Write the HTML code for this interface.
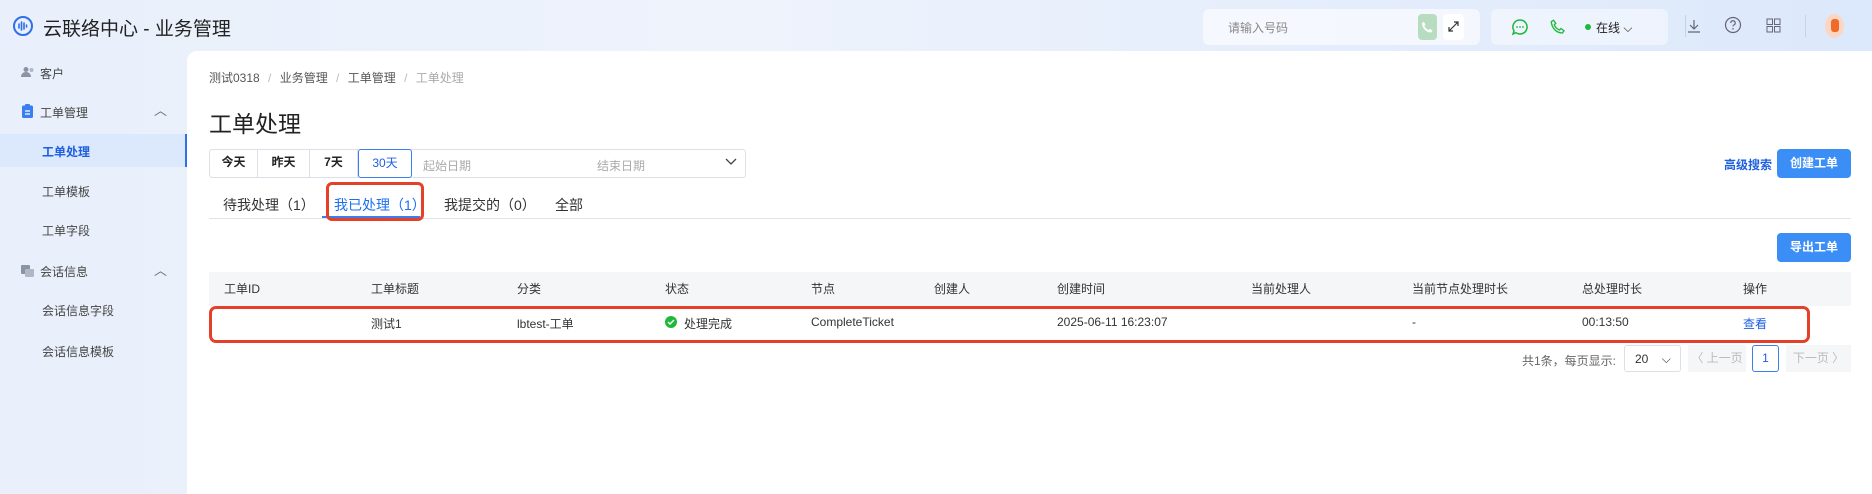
<!DOCTYPE html>
<html><head><meta charset="utf-8"><style>
*{margin:0;padding:0;box-sizing:border-box}
body{width:1872px;height:494px;overflow:hidden;font-family:"Liberation Sans","Noto Sans CJK SC",sans-serif;background:linear-gradient(90deg,#e9f0fb,#eef3fc 40%,#dce8fb);position:relative;color:#333;font-size:12px}
.a{position:absolute;white-space:nowrap}
.main{position:absolute;left:187px;top:51px;width:1685px;height:443px;background:#fff;border-top-left-radius:10px}
.si{position:absolute;left:42px;font-size:12px;color:#444}
.th{position:absolute;top:280px;font-size:12px;color:#333}
.td{position:absolute;top:315px;font-size:12px;color:#333}
.btn{position:absolute;background:#3a8ef6;color:#fff;font-size:12px;font-weight:bold;border-radius:4px;text-align:center}
.db{position:absolute;top:149px;height:29px;line-height:27px;text-align:center;font-size:12px;border-right:1px solid #dcdfe6;font-weight:bold;color:#222}
</style></head><body>
<svg class="a" style="left:12px;top:15px" width="22" height="22" viewBox="0 0 22 22"><circle cx="11" cy="11" r="9" fill="none" stroke="#2f6fe8" stroke-width="2"/><path d="M7 9v4M9.5 7v8M12 8v6M14.5 10v2" stroke="#2f6fe8" stroke-width="1.6" stroke-linecap="round"/></svg>
<div class="a" style="left:43px;top:14px;font-size:19px;color:#222">云联络中心 - 业务管理</div>
<div class="a" style="left:1203px;top:9px;width:277px;height:36px;background:rgba(255,255,255,.6);border-radius:6px"></div>
<div class="a" style="left:1228px;top:19px;font-size:12px;color:#888">请输入号码</div>
<div class="a" style="left:1418px;top:14px;width:19px;height:26px;background:#b7dcc0;border-radius:4px"></div>
<svg class="a" style="left:1420px;top:20px" width="15" height="15" viewBox="0 0 24 24"><path d="M6 3l3 4-2 2c1 3 4 6 7 7l2-2 4 3-2 3C10 20 4 14 3 5z" fill="#fff"/></svg>
<div class="a" style="left:1443px;top:14px;width:21px;height:26px;background:#fff;border-radius:4px"></div>
<svg class="a" style="left:1447px;top:20px" width="13" height="13" viewBox="0 0 13 13"><path d="M2 11L11 2M7 2h4v4M2 7v4h4" fill="none" stroke="#333" stroke-width="1.2"/></svg>
<div class="a" style="left:1491px;top:9px;width:177px;height:36px;background:rgba(255,255,255,.45);border-radius:6px"></div>
<svg class="a" style="left:1511px;top:18px" width="18" height="18" viewBox="0 0 18 18"><path d="M9 2a7 7 0 1 1-4 12.7L2 16l1-3.2A7 7 0 0 1 9 2z" fill="none" stroke="#1fb83a" stroke-width="1.5"/><circle cx="6" cy="9" r=".9" fill="#1fb83a"/><circle cx="9" cy="9" r=".9" fill="#1fb83a"/><circle cx="12" cy="9" r=".9" fill="#1fb83a"/></svg>
<svg class="a" style="left:1549px;top:18px" width="18" height="18" viewBox="0 0 24 24"><path d="M6 3l3 4-2 2c1 3 4 6 7 7l2-2 4 3-2 3C10 20 4 14 3 5z" fill="none" stroke="#1fb83a" stroke-width="1.8"/></svg>
<div class="a" style="left:1585px;top:24px;width:6px;height:6px;border-radius:50%;background:#1fb83a"></div>
<div class="a" style="left:1596px;top:19px;font-size:12px;color:#222">在线 ⌵</div>
<div class="a" style="left:1685px;top:15px;width:1px;height:22px;background:#c9d3e0"></div>
<svg class="a" style="left:1686px;top:18px" width="16" height="16" viewBox="0 0 16 16"><path d="M8 2v9M4 7l4 4 4-4M2 14h12" fill="none" stroke="#667" stroke-width="1.2"/></svg>
<svg class="a" style="left:1724px;top:16px" width="18" height="18" viewBox="0 0 18 18"><circle cx="9" cy="9" r="7.5" fill="none" stroke="#667" stroke-width="1.2"/><path d="M6.8 7a2.2 2.2 0 1 1 3 2c-.6.3-.8.7-.8 1.4" fill="none" stroke="#667" stroke-width="1.2"/><circle cx="9" cy="12.8" r=".8" fill="#667"/></svg>
<svg class="a" style="left:1766px;top:18px" width="15" height="15" viewBox="0 0 15 15"><rect x="1" y="1" width="5.5" height="5.5" fill="none" stroke="#667"/><rect x="8.5" y="1" width="5.5" height="5.5" fill="none" stroke="#667"/><rect x="1" y="8.5" width="5.5" height="5.5" fill="none" stroke="#667"/><rect x="8.5" y="8.5" width="5.5" height="5.5" fill="none" stroke="#667"/></svg>
<div class="a" style="left:1805px;top:15px;width:1px;height:22px;background:#c9d3e0"></div>
<div class="a" style="left:1825px;top:14px;width:19px;height:24px;border-radius:50%;background:#fcd6c4"></div>
<div class="a" style="left:1831px;top:19px;width:8px;height:13px;border-radius:3px;background:#f06a2a"></div>
<svg class="a" style="left:21px;top:66px" width="14" height="12" viewBox="0 0 14 12"><circle cx="5" cy="3.5" r="2.5" fill="#8a94a6"/><path d="M0 11c0-3 2-5 5-5s5 2 5 5z" fill="#8a94a6"/><circle cx="10.5" cy="4" r="2" fill="#b0b8c6"/></svg>
<div class="si" style="left:40px;top:65px">客户</div>
<svg class="a" style="left:22px;top:104px" width="11" height="14" viewBox="0 0 11 14"><rect x="0" y="1.5" width="11" height="12.5" rx="1.5" fill="#3a7ef0"/><rect x="3" y="0" width="5" height="3" rx="1" fill="#3a7ef0"/><path d="M3 7h5M3 10h5" stroke="#fff" stroke-width="1.2"/></svg>
<div class="si" style="left:40px;top:104px">工单管理</div>
<div class="a" style="left:154px;top:100px;font-size:13px;color:#666">︿</div>
<div class="a" style="left:0;top:134px;width:187px;height:33px;background:#dce8fb;border-right:2px solid #2f6fe8"></div>
<div class="si" style="top:143px;color:#1d5fe0;font-weight:bold">工单处理</div>
<div class="si" style="top:183px">工单模板</div>
<div class="si" style="top:222px">工单字段</div>
<svg class="a" style="left:21px;top:265px" width="13" height="12" viewBox="0 0 13 12"><rect x="0" y="0" width="9" height="9" rx="1" fill="#8a94a6"/><rect x="4" y="4" width="9" height="8" rx="1" fill="#b0b8c6"/></svg>
<div class="si" style="left:40px;top:263px">会话信息</div>
<div class="a" style="left:154px;top:260px;font-size:13px;color:#666">︿</div>
<div class="si" style="top:302px">会话信息字段</div>
<div class="si" style="top:343px">会话信息模板</div>
<div class="main"></div>
<div class="a" style="left:209px;top:69px;font-size:12px;color:#555">测试0318 <span style="color:#bbb;margin:0 5px">/</span> 业务管理 <span style="color:#bbb;margin:0 5px">/</span> 工单管理 <span style="color:#bbb;margin:0 5px">/</span> <span style="color:#aaa">工单处理</span></div>
<div class="a" style="left:209px;top:105px;font-size:23px;color:#222">工单处理</div>
<div class="a" style="left:209px;top:149px;width:537px;height:29px;border:1px solid #dcdfe6;border-radius:3px"></div>
<div class="db" style="left:210px;width:48px">今天</div>
<div class="db" style="left:258px;width:52px">昨天</div>
<div class="db" style="left:310px;width:48px">7天</div>
<div class="a" style="left:358px;top:149px;width:54px;height:29px;border:1px solid #3a7ef0;border-radius:3px;line-height:27px;text-align:center;color:#1d5fe0;font-size:12px">30天</div>
<div class="a" style="left:423px;top:157px;color:#aaa;font-size:12px">起始日期</div>
<div class="a" style="left:597px;top:157px;color:#aaa;font-size:12px">结束日期</div>
<svg class="a" style="left:725px;top:157px" width="12" height="10" viewBox="0 0 12 10"><path d="M1 2l5 5 5-5" fill="none" stroke="#444" stroke-width="1.3"/></svg>
<div class="a" style="left:1724px;top:156px;color:#1d5fe0;font-size:12px;font-weight:bold">高级搜索</div>
<div class="btn" style="left:1777px;top:149px;width:74px;height:29px;line-height:29px">创建工单</div>
<div class="a" style="left:209px;top:218px;width:1642px;height:1px;background:#e2e4e8"></div>
<div class="a" style="left:322px;top:216px;width:98px;height:2px;background:#3a7ef0"></div>
<div class="a" style="left:223px;top:195px;font-size:14px;color:#333">待我处理（1）</div>
<div class="a" style="left:334px;top:195px;font-size:14px;color:#1d6ff0">我已处理（1）</div>
<div class="a" style="left:444px;top:195px;font-size:14px;color:#333">我提交的（0）</div>
<div class="a" style="left:555px;top:195px;font-size:14px;color:#333">全部</div>
<div class="a" style="left:326px;top:182px;width:98px;height:39px;border:3px solid #e4402a;border-radius:6px"></div>
<div class="btn" style="left:1777px;top:233px;width:74px;height:29px;line-height:29px">导出工单</div>
<div class="a" style="left:209px;top:272px;width:1642px;height:34px;background:#f5f6f8"></div>
<div class="th" style="left:224px">工单ID</div><div class="th" style="left:371px">工单标题</div><div class="th" style="left:517px">分类</div><div class="th" style="left:665px">状态</div><div class="th" style="left:811px">节点</div><div class="th" style="left:934px">创建人</div><div class="th" style="left:1057px">创建时间</div><div class="th" style="left:1251px">当前处理人</div><div class="th" style="left:1412px">当前节点处理时长</div><div class="th" style="left:1582px">总处理时长</div><div class="th" style="left:1743px">操作</div>
<div class="td" style="left:371px">测试1</div><div class="td" style="left:517px">lbtest-工单</div>
<svg class="a" style="left:665px;top:316px" width="12" height="12" viewBox="0 0 12 12"><circle cx="6" cy="6" r="6" fill="#1fb83a"/><path d="M3 6l2 2 4-4" fill="none" stroke="#fff" stroke-width="1.4"/></svg>
<div class="td" style="left:684px">处理完成</div><div class="td" style="left:811px">CompleteTicket</div><div class="td" style="left:1057px">2025-06-11 16:23:07</div><div class="td" style="left:1412px">-</div><div class="td" style="left:1582px">00:13:50</div><div class="td" style="left:1743px;color:#1d5fe0">查看</div>
<div class="a" style="left:209px;top:306px;width:1601px;height:37px;border:3px solid #e4402a;border-radius:7px"></div>
<div class="a" style="left:1522px;top:352px;font-size:12px;color:#666">共1条，每页显示:</div>
<div class="a" style="left:1624px;top:345px;width:57px;height:27px;border:1px solid #dcdfe6;border-radius:3px;padding:6px 0 0 10px;font-size:12px">20 <span style="margin-left:10px">⌵</span></div>
<div class="a" style="left:1688px;top:345px;width:58px;height:27px;background:#f5f6f8;font-size:12px;color:#bbb;line-height:27px;text-align:center">〈 上一页</div>
<div class="a" style="left:1752px;top:345px;width:27px;height:27px;border:1px solid #3a7ef0;border-radius:3px;line-height:25px;text-align:center;color:#1d5fe0;font-size:12px">1</div>
<div class="a" style="left:1786px;top:345px;width:65px;height:27px;background:#f5f6f8;font-size:12px;color:#bbb;line-height:27px;text-align:center">下一页 〉</div>
</body></html>
